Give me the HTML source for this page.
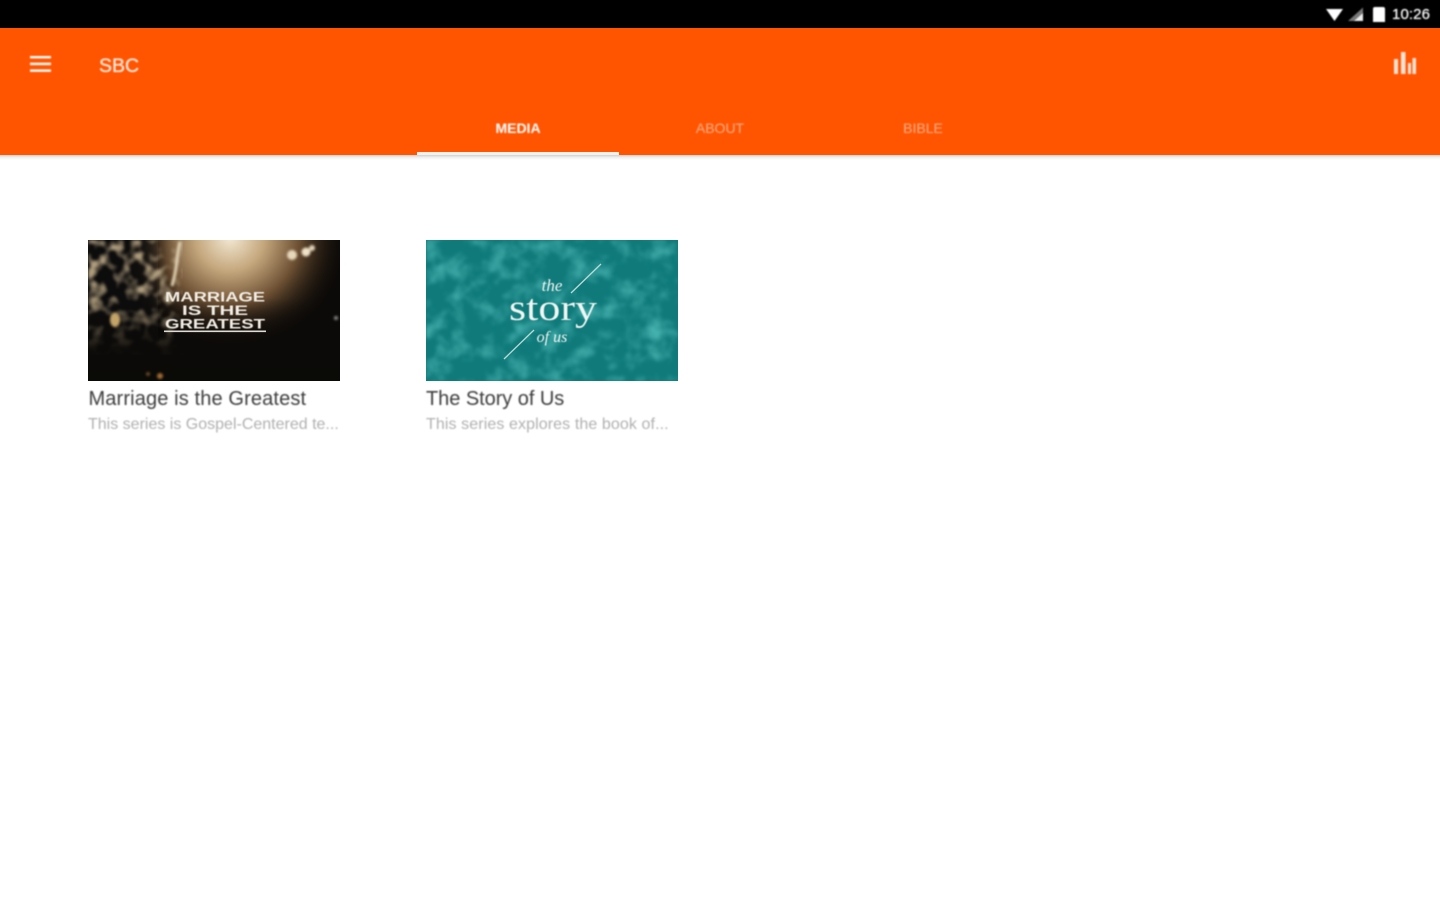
<!DOCTYPE html>
<html>
<head>
<meta charset="utf-8">
<style>
html,body{margin:0;padding:0;width:1440px;height:900px;overflow:hidden;background:#fff;font-family:"Liberation Sans",sans-serif}
.abs{position:absolute;white-space:nowrap}
#status{position:absolute;left:0;top:0;width:1440px;height:28px;background:#000}
#bar{position:absolute;left:0;top:28px;width:1440px;height:127px;background:#ff5500}
#shadow{position:absolute;left:0;top:155px;width:1440px;height:5px;background:linear-gradient(#cfcfcf,#efefef 45%,#fff)}
.b{filter:blur(.7px)}
</style>
</head>
<body>
<div id="status"></div>
<div id="bar"></div>
<div id="shadow"></div>

<svg class="abs b" style="left:1320px;top:0" width="70" height="28" viewBox="0 0 70 28">
<path d="M6 9 H23 L14.5 21 Z" fill="#fff"/>
<path d="M28 21 L43 7.5 V21 Z" fill="#777"/>
<path d="M34 21 L43 13 V21 Z" fill="#eee"/>
<path d="M53 9 Q53 7 55 7 H63 Q65 7 65 9 V22 H53 Z" fill="#fff"/>
</svg>
<div class="abs b" style="left:1392px;top:6px;font-size:15px;line-height:18px;color:#fff;letter-spacing:.1px;text-shadow:0 0 .6px #fff">10:26</div>

<svg class="abs b" style="left:30px;top:55px" width="22" height="20" viewBox="0 0 22 20">
<rect x="0" y="1" width="21" height="2.4" fill="#fff"/>
<rect x="0" y="7.7" width="21" height="2.4" fill="#fff"/>
<rect x="0" y="14.4" width="21" height="2.4" fill="#fff"/>
</svg>
<div class="abs b" style="left:99px;top:54px;font-size:19.5px;line-height:25px;color:#ffeee6;text-shadow:0 0 .6px #fff">SBC</div>

<svg class="abs b" style="left:1392px;top:50px" width="26" height="26" viewBox="0 0 26 26">
<rect x="2" y="9" width="4" height="15" fill="#ffe3d5"/>
<rect x="9" y="2" width="4.5" height="22" fill="#ffe3d5"/>
<rect x="16" y="13" width="3" height="11" fill="#ffe3d5"/>
<rect x="20.5" y="8" width="3.5" height="16" fill="#ffe3d5"/>
</svg>

<div class="abs b" style="left:417px;width:202px;top:120px;text-align:center;font-size:14px;line-height:16px;font-weight:bold;color:#fff">MEDIA</div>
<div class="abs b" style="left:619px;width:202px;top:120px;text-align:center;font-size:14px;line-height:16px;color:#ffb08a">ABOUT</div>
<div class="abs b" style="left:822px;width:202px;top:120px;text-align:center;font-size:14px;line-height:16px;color:#ffb08a">BIBLE</div>
<div class="abs" style="left:417px;top:152px;width:202px;height:3px;background:#f4f0ec"></div>

<svg class="abs" style="left:88px;top:240px" width="252" height="141" viewBox="0 0 252 141">
<defs>
<filter id="f3" filterUnits="userSpaceOnUse" x="-80" y="-80" width="420" height="320"><feGaussianBlur stdDeviation="10"/></filter>
<filter id="f2" x="-20%" y="-20%" width="140%" height="140%"><feGaussianBlur stdDeviation="1.4"/></filter>
<filter id="leaf" x="0" y="0" width="100%" height="100%">
<feTurbulence type="fractalNoise" baseFrequency=".07" numOctaves="2" seed="7"/>
<feColorMatrix values="0 0 0 0 .42  0 0 0 0 .33  0 0 0 0 .2  4 0 0 0 -1.85"/>
<feGaussianBlur stdDeviation="1.1"/>
</filter>
<filter id="teal" x="0" y="0" width="100%" height="100%">
<feTurbulence type="fractalNoise" baseFrequency=".05" numOctaves="3" seed="11"/>
<feColorMatrix values="0 0 0 0 .10  0 0 0 0 .56  0 0 0 0 .54  1.6 0 0 0 -.7"/>
<feGaussianBlur stdDeviation="1.4"/>
</filter>
<radialGradient id="g1" cx="50%" cy="50%" r="50%">
<stop offset="0" stop-color="#f3e8d2"/><stop offset=".3" stop-color="#c4a67c"/><stop offset=".6" stop-color="#6d5033"/><stop offset="1" stop-color="#1a120b" stop-opacity="0"/>
</radialGradient>
<linearGradient id="fade" x1="0" y1="0" x2="0" y2="1">
<stop offset="0" stop-color="#0c0a08" stop-opacity="0"/><stop offset=".6" stop-color="#0c0a08" stop-opacity=".95"/><stop offset="1" stop-color="#0a0a07"/>
</linearGradient>
<clipPath id="c1"><rect width="252" height="141"/></clipPath>
</defs>
<rect width="252" height="141" fill="#0c0a08"/>
<g clip-path="url(#c1)">
<ellipse cx="142" cy="-2" rx="115" ry="112" fill="url(#g1)"/>
<rect x="-20" y="-20" width="90" height="180" fill="#0c0a08" opacity=".8" filter="url(#f3)"/>
<rect x="0" y="0" width="95" height="115" filter="url(#leaf)"/>
<rect x="0" y="58" width="252" height="83" fill="url(#fade)"/>
<g filter="url(#f2)">
<path d="M92 2 C88 18 90 26 84 46" stroke="#e2d3b6" stroke-width="3" fill="none"/>
<ellipse cx="27" cy="80" rx="5" ry="7" fill="#c4a468"/>
<circle cx="204" cy="15" r="5" fill="#e6d8bc"/><circle cx="218" cy="12" r="4.5" fill="#efe2c8"/><circle cx="224" cy="8" r="3" fill="#e0d2b6"/>
<circle cx="248" cy="78" r="2" fill="#888"/>
<circle cx="72" cy="136" r="3" fill="#a06a30"/><circle cx="60" cy="134" r="2" fill="#6a4620"/>
</g>
</g>
<g font-family="Liberation Sans,sans-serif" font-weight="bold" fill="#f2eee6" font-size="13.5" text-anchor="middle" style="filter:blur(.6px)">
<text x="127" y="61.5" textLength="100" lengthAdjust="spacingAndGlyphs">MARRIAGE</text>
<text x="127" y="75" textLength="66" lengthAdjust="spacingAndGlyphs">IS THE</text>
<text x="127" y="88.5" textLength="100" lengthAdjust="spacingAndGlyphs">GREATEST</text>
</g>
<rect x="76" y="90.5" width="102" height="1.6" fill="#e0dcd4"/>
</svg>

<svg class="abs" style="left:426px;top:240px" width="252" height="141" viewBox="0 0 252 141">
<rect width="252" height="141" fill="#107a7a"/>
<rect width="252" height="141" filter="url(#teal)"/>
<g fill="#f0f6f3" text-anchor="middle" font-family="Liberation Serif,serif" style="filter:blur(.4px)">
<text x="126" y="51" font-size="17" font-style="italic">the</text>
<text x="127" y="80" font-size="37" textLength="88" lengthAdjust="spacingAndGlyphs">story</text>
<text x="126" y="102" font-size="16" font-style="italic">of us</text>
</g>
<path d="M145 53 L175 24 M78 119 L108 90" stroke="#bcdcd6" stroke-width="1.3"/>
</svg>

<div class="abs b" style="left:88.5px;top:388px;font-size:20px;line-height:23px;color:#3c3c3c;letter-spacing:.13px">Marriage is the Greatest</div>
<div class="abs b" style="left:88px;top:415px;font-size:16px;line-height:19px;color:#b0b0b0">This series is Gospel-Centered te...</div>
<div class="abs b" style="left:426px;top:388px;font-size:20px;line-height:23px;color:#3c3c3c;letter-spacing:-.05px">The Story of Us</div>
<div class="abs b" style="left:426px;top:415px;font-size:16px;line-height:19px;color:#b0b0b0;letter-spacing:.1px">This series explores the book of...</div>
</body>
</html>
